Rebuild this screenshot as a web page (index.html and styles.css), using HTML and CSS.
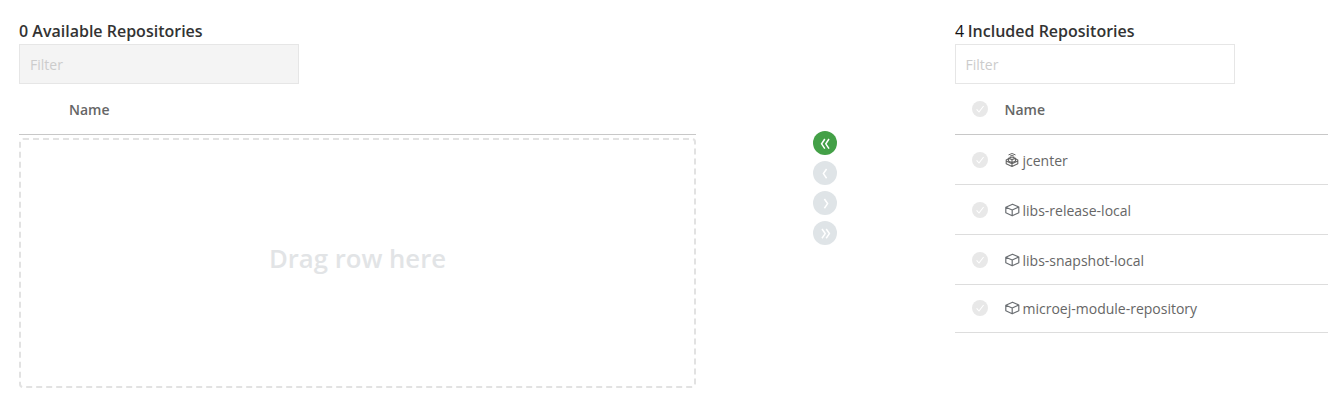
FILE: index.html
```html
<!DOCTYPE html>
<html lang="en">
<head>
<meta charset="utf-8">
<title>Repositories</title>
<link rel="stylesheet" href="styles.css">
</head>
<body>
<svg class="defs" width="0" height="0" aria-hidden="true">
  <symbol id="check" viewBox="0 0 16 16">
    <circle cx="8" cy="8" r="8" fill="#e8e8e8"/>
    <path d="M4.6 8.4 7 11 11.6 5" fill="none" stroke="#fff" stroke-width="1.1"/>
  </symbol>
  <symbol id="box" viewBox="0 0 15 14">
    <path d="M.8 4.2 7.5 1.2 13.8 4V9.8L7.2 12.8.8 9.8ZM.8 4.2 7.200 7 13.8 4M7.2 7V12.8" fill="none" stroke="#6b6f73" stroke-width="1.2" stroke-linejoin="round"/>
  </symbol>
  <symbol id="remote" viewBox="0 0 15 14">
    <g fill="none" stroke="#666" stroke-linejoin="round">
      <path d="M3.5 1.900Q7-.9 10.500 1.900M4.800 3.300Q7 1.600 9.200 3.300"/>
      <path d="M3.500 5.200 7 4 10.500 5.200V8.200L7 9.600 3.500 8.200ZM3.500 5.200 7 6.600 10.500 5.200M7 6.600V9.600" stroke-width="1.2"/>
      <path d="M3.500 5.800 1.200 7V10.800L7 13.400 12.800 10.800V7L10.500 5.800M1.200 7.900 7 10.800 12.800 7.900M7 10.800V13.400" stroke-width="1.1"/>
    </g>
  </symbol>
</svg>
<main class="picker">
  <section class="panel available">
    <h2 class="title">0 Available Repositories</h2>
    <input class="filter" type="text" placeholder="Filter" disabled>
    <div class="row head"><span class="name">Name</span></div>
    <div class="dropzone">Drag row here</div>
  </section>
  <nav class="actions">
    <button class="move active"><svg viewBox="0 0 24 24"><path d="M11.8 8 8.6 12.800 11.800 17.600M16 8 12.800 12.800 16 17.600"/></svg></button>
    <button class="move"><svg viewBox="0 0 24 24"><path d="M13.600 8 10.400 12.600 13.600 17.200"/></svg></button>
    <button class="move"><svg viewBox="0 0 24 24"><path d="M11.400 8 14.600 12.600 11.400 17.200"/></svg></button>
    <button class="move"><svg viewBox="0 0 24 24"><path d="M9 8 12.200 12.600 9 17.200M13.200 8 16.400 12.600 13.200 17.200"/></svg></button>
  </nav>
  <section class="panel included">
    <h2 class="title"><span class="count">4</span> Included Repositories</h2>
    <input class="filter" type="text" placeholder="Filter">
    <div class="row head"><svg class="check"><use href="#check"/></svg><span class="name">Name</span></div>
    <div class="row"><svg class="check"><use href="#check"/></svg><svg class="type"><use href="#remote"/></svg><span>jcenter</span></div>
    <div class="row"><svg class="check"><use href="#check"/></svg><svg class="type"><use href="#box"/></svg><span>libs-release-local</span></div>
    <div class="row"><svg class="check"><use href="#check"/></svg><svg class="type"><use href="#box"/></svg><span>libs-snapshot-local</span></div>
    <div class="row last"><svg class="check"><use href="#check"/></svg><svg class="type"><use href="#box"/></svg><span>microej-module-repository</span></div>
  </section>
</main>
</body>
</html>
```
FILE: styles.css
```css
* { box-sizing: border-box; }
body {
  margin: 0;
  background: #fff;
  color: #666;
  font: 14px/20px "Open Sans", sans-serif;
}
.defs { display: block; height: 0; }
.picker {
  display: grid;
  grid-template-columns: 677px 24px 1fr;
  column-gap: 117px;
  padding: 20px 0 0 19px;
}
.included { margin-left: 1px; }
.title {
  margin: 0;
  height: 24px;
  font-size: 16px;
  font-weight: 600;
  line-height: 22px;
  color: #333;
  white-space: nowrap;
}
.count { font-weight: 400; margin-right: -0.6px; color: #111; }
.filter {
  display: block;
  width: 280px;
  height: 40px;
  padding: 0 10px;
  border: 1px solid #e6e6e6;
  background: #fff;
  font: 14px "Open Sans", sans-serif;
}
.included .filter { padding-left: 9.5px; }
.filter:disabled { background: #f4f4f4; }
.filter::placeholder { color: #ccc; opacity: 1; }
.row {
  display: flex;
  align-items: center;
  height: 50px;
  padding-left: 17px;
  border-bottom: 1px solid #ddd;
}
.row span { padding-top: 2px; }
.row.last { height: 48px; padding-bottom: 1px; }
.row.head {
  height: 51px;
  font-weight: 600;
  border-color: #c8c8c8;
}
.available .name { margin-left: 33px; }
.check { width: 16px; height: 16px; margin-right: 16.5px; }
.type { width: 15px; height: 14px; margin-right: 3px; }
.dropzone {
  display: flex;
  align-items: center;
  justify-content: center;
  height: 250px;
  margin-top: 3px;
  padding-bottom: 9px;
  border: 2px dashed #e2e2e2;
  border-radius: 4px;
  font-size: 25.7px;
  line-height: 36px;
  font-weight: 600;
  color: #e2e4e6;
}
.actions {
  display: flex;
  flex-direction: column;
  gap: 6px;
  padding-top: 111px;
}
.move {
  width: 24px;
  height: 24px;
  padding: 0;
  border: 0;
  border-radius: 50%;
  background: #dfe4e7;
}
.move.active { background: #43a047; }
.move svg { display: block; fill: none; stroke: #fff; stroke-width: 1.5; }
```
